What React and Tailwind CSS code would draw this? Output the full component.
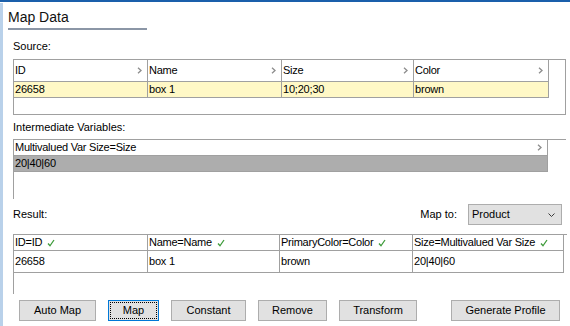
import React from 'react'

function Chevron() {
  return (
    <svg width="5" height="7" viewBox="0 0 5 7" className="shrink-0">
      <path d="M1 0.8 L4 3.5 L1 6.2" fill="none" stroke="#8c8c8c" strokeWidth="1.3" />
    </svg>
  )
}

function Tick() {
  return (
    <svg width="8" height="8" viewBox="0 0 8 8" className="ml-[5px] shrink-0">
      <path d="M1 4.5 L3 6.8 L7 1" fill="none" stroke="#3e9b3a" strokeWidth="1.3" />
    </svg>
  )
}

function HeadCell({ w, children, chevron, tick }) {
  return (
    <div className={`${w} flex h-full items-center justify-between border-r border-b border-[#a0a0a0] pl-[1px] pr-[5px] tracking-[-0.25px]`}>
      <span className="flex items-center whitespace-nowrap">
        {children}
        {tick ? <Tick /> : null}
      </span>
      {chevron ? <Chevron /> : null}
    </div>
  )
}

function Cell({ w, children }) {
  return (
    <div className={`${w} flex h-full items-center border-r border-b border-[#a0a0a0] pl-[1px] tracking-[-0.2px]`}>{children}</div>
  )
}

const buttons = [
  { label: 'Auto Map', cls: 'ml-[16px] w-[77px]' },
  { label: 'Map', cls: 'ml-[12px] w-[51px]', focused: true },
  { label: 'Constant', cls: 'ml-[12px] w-[75px]' },
  { label: 'Remove', cls: 'ml-[12px] w-[69px]' },
  { label: 'Transform', cls: 'ml-[12px] w-[78px]' },
  { label: 'Generate Profile', cls: 'ml-[34px] w-[109px]' },
]

export default function App() {
  return (
    <div className="flex h-[326px] w-[570px] flex-col overflow-hidden bg-white font-['Liberation_Sans',Arial,sans-serif] text-[11px] text-black">
      <div className="h-[2px] bg-[#1a5fab]" />
      <div className="flex flex-1">
        <div className="mt-[1px] w-[3px] bg-[#b9d1ea]" />
        <div className="flex flex-1 flex-col">
          <div className="ml-[5px] mt-[6px] h-[18px] text-[14px] leading-[18px] text-[#111]">Map Data</div>
          <div className="ml-[5px] mt-[2px] h-[2px] w-[139px] bg-[#8b96a6]" />

          <div className="ml-[10px] mt-[10px] h-[13px] leading-[13px]">Source:</div>
          <div className="ml-[10px] mt-[6px] h-[56px] w-[553px] border border-[#a0a0a0]">
            <div className="flex h-[22px]">
              <HeadCell w="w-[134px]" chevron>ID</HeadCell>
              <HeadCell w="w-[134px]" chevron>Name</HeadCell>
              <HeadCell w="w-[132px]" chevron>Size</HeadCell>
              <HeadCell w="w-[135px]" chevron>Color</HeadCell>
            </div>
            <div className="flex h-[16px] w-[535px] bg-[#fff8c6]">
              <Cell w="w-[134px]">26658</Cell>
              <Cell w="w-[134px]">box 1</Cell>
              <Cell w="w-[132px]">10;20;30</Cell>
              <Cell w="w-[135px]">brown</Cell>
            </div>
          </div>

          <div className="ml-[10px] mt-[6px] h-[13px] leading-[13px]">Intermediate Variables:</div>
          <div className="ml-[10px] mt-[5px] h-[60px] w-[553px] border-t border-l border-[#a0a0a0]">
            <div className="flex h-[16px]">
              <HeadCell w="w-[534px]" chevron>Multivalued Var Size=Size</HeadCell>
            </div>
            <div className="flex h-[16px] w-[534px] bg-[#adadad]">
              <Cell w="w-[534px]">20|40|60</Cell>
            </div>
          </div>

          <div className="ml-[10px] mt-[5px] flex h-[21px] items-center">
            <span>Result:</span>
            <span className="ml-auto">Map to:</span>
            <div className="ml-[11px] mr-[8px] flex h-[21px] w-[94px] items-center justify-between border border-[#adadad] bg-[#e1e1e1] pl-[3px] pr-[6px]">
              <span>Product</span>
              <svg width="7" height="4" viewBox="0 0 7 4">
                <path d="M0.5 0.5 L3.5 3.5 L6.5 0.5" fill="none" stroke="#3a3a3a" strokeWidth="1" />
              </svg>
            </div>
          </div>

          <div className="ml-[10px] mt-[9px] h-[60px] w-[554px] border-t border-l border-[#a0a0a0]">
            <div className="flex h-[16px]">
              <HeadCell w="w-[134px]" tick>ID=ID</HeadCell>
              <HeadCell w="w-[132px]" tick>Name=Name</HeadCell>
              <HeadCell w="w-[133px]" tick>PrimaryColor=Color</HeadCell>
              <HeadCell w="w-[151px]" tick>Size=Multivalued Var Size</HeadCell>
            </div>
            <div className="flex h-[22px]">
              <Cell w="w-[134px]">26658</Cell>
              <Cell w="w-[132px]">box 1</Cell>
              <Cell w="w-[133px]">brown</Cell>
              <Cell w="w-[151px]">20|40|60</Cell>
            </div>
          </div>

          <div className="mt-[6px] flex h-[21px]">
            {buttons.map((b) => (
              <button
                key={b.label}
                type="button"
                className={`${b.cls} h-[21px] border bg-[#e1e1e1] text-[11px] leading-none ${
                  b.focused
                    ? 'border-[#0078d7] outline outline-1 outline-dotted outline-black outline-offset-[-3px]'
                    : 'border-[#adadad]'
                }`}
              >
                {b.label}
              </button>
            ))}
          </div>
        </div>
      </div>
    </div>
  )
}
